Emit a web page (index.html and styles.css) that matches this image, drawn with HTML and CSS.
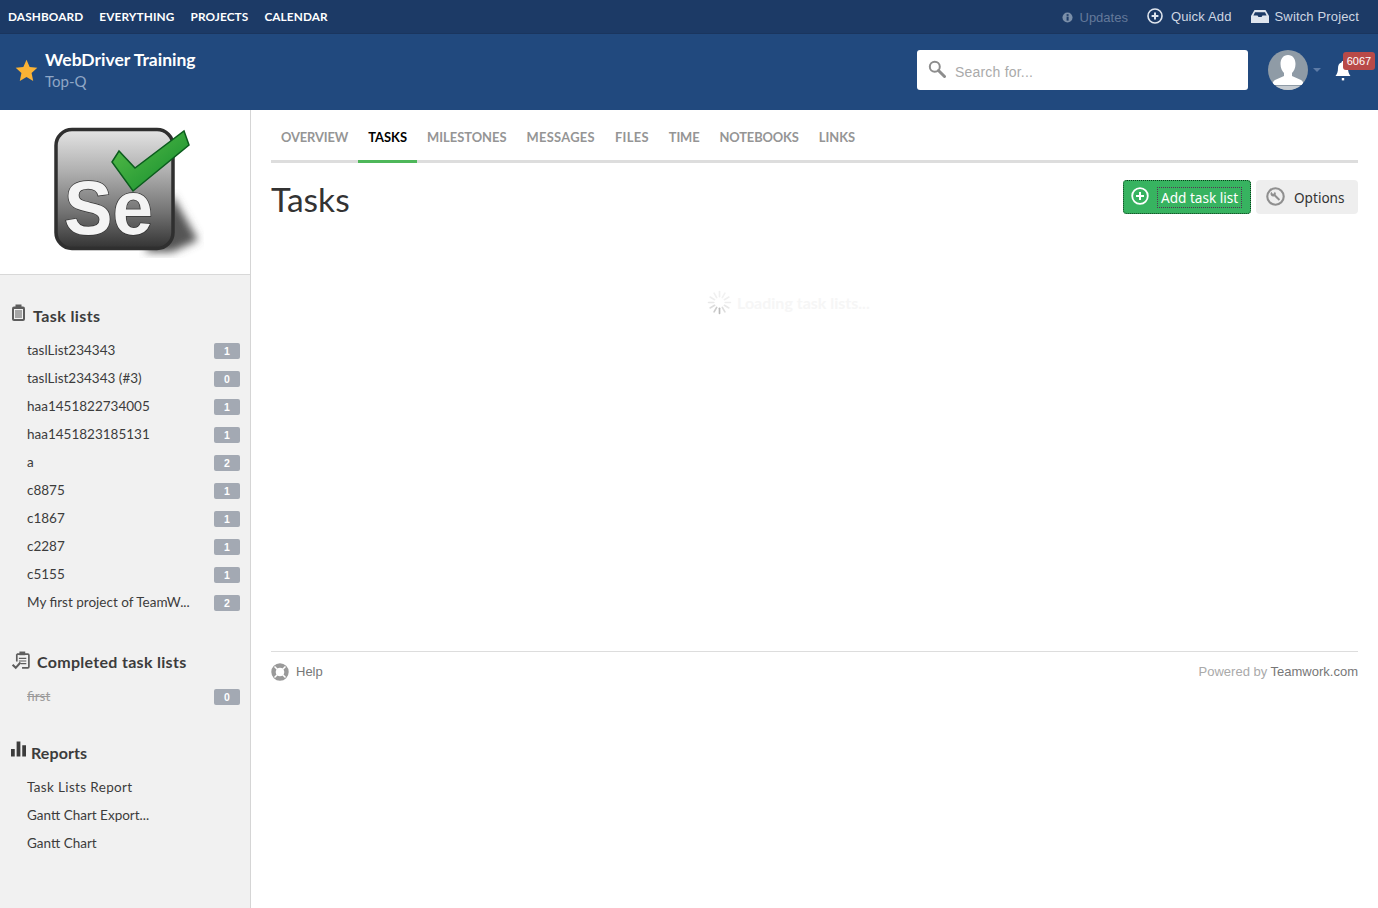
FILE: index.html
```html
<!DOCTYPE html>
<html lang="en">
<head>
<meta charset="utf-8">
<title>Tasks</title>
<link rel="stylesheet" href="styles.css">
</head>
<body>
<header class="topbar">
  <nav class="topnav">
    <a>DASHBOARD</a><a>EVERYTHING</a><a>PROJECTS</a><a>CALENDAR</a>
  </nav>
  <div class="toplinks">
    <span class="toplink dim">
      <svg class="ico-info" viewBox="0 0 12 12"><circle cx="6" cy="6" r="5.5" fill="#7b8fa9"/><rect x="5" y="5" width="2.2" height="4.4" fill="#1c3a66"/><rect x="5" y="2.4" width="2.2" height="1.8" fill="#1c3a66"/></svg>
      Updates
    </span>
    <span class="toplink">
      <svg class="ico-plus" viewBox="0 0 16 16"><circle cx="8" cy="8" r="7" fill="none" stroke="#dfe5ee" stroke-width="1.6"/><path d="M8 4.6v6.8M4.6 8h6.8" stroke="#dfe5ee" stroke-width="2"/></svg>
      Quick Add
    </span>
    <span class="toplink">
      <svg class="ico-box" viewBox="0 0 18 13"><path d="M3.5 0h11L18 6v7H0V6z" fill="#dfe5ee"/><path d="M4 2.2h10l1.6 3.2H11.5L10.5 7h-3L6.5 5.4H2.4z" fill="#1c3a66"/></svg>
      Switch Project
    </span>
  </div>
</header>
<section class="projectbar">
  <div class="project">
    <svg class="star" viewBox="0 0 24 24"><path d="M12 .8l3.3 7.6 8 .8-6 5.5 1.7 8.2L12 18.700 5 22.900l1.700-8.200-6-5.500 8-.8z" fill="#fbb335"/></svg>
    <div>
      <div class="project-name">WebDriver Training</div>
      <div class="project-company">Top-Q</div>
    </div>
  </div>
  <div class="search">
    <svg class="ico-search" viewBox="0 0 18 18"><circle cx="6.800" cy="6.800" r="5" fill="none" stroke="#8d8d8d" stroke-width="2"/><path d="M10.500 10.500l6 6" stroke="#8d8d8d" stroke-width="3" stroke-linecap="round"/></svg>
    <span class="search-hint">Search for...</span>
  </div>
  <div class="avatar-wrap">
    <svg class="avatar" viewBox="0 0 40 40"><defs><clipPath id="avc"><circle cx="20" cy="20" r="20"/></clipPath></defs><g clip-path="url(#avc)"><rect width="40" height="40" fill="#8f9ba6"/><path d="M20 5c5 0 7.500 4 7.500 9 0 4-1.500 7-3.500 9v3l9 4c2 1 2.500 3 2.500 5H4.500c0-2 .5-4 2.500-5l9-4v-3c-2-2-3.500-5-3.500-9 0-5 2.500-9 7.500-9z" fill="#fff"/><rect y="36" width="40" height="4" fill="#c5cbd1"/></g></svg>
    <span class="caret"></span>
  </div>
  <div class="bell-wrap">
    <svg class="bell" viewBox="0 0 16 22"><path d="M8 1c1 0 1.500.6 1.500 1.500C12 3.300 13 5.500 13 8c0 4 1 6 2.500 8H.5C2 14 3 12 3 8c0-2.500 1-4.700 3.500-5.500C6.500 1.600 7 1 8 1z" fill="#fff"/><rect x="6.800" y="18" width="2.400" height="2.400" fill="#fff"/></svg>
    <span class="bell-count">6067</span>
  </div>
</section>
<div class="layout">
  <aside class="sidebar">
    <div class="logo">
      <svg class="logo-svg" viewBox="0 0 155 135">
        <defs>
          <linearGradient id="tile" x1="0" y1="0" x2="0" y2="1"><stop offset="0" stop-color="#e4e4e4"/><stop offset=".35" stop-color="#b0b0b0"/><stop offset=".7" stop-color="#727272"/><stop offset="1" stop-color="#333"/></linearGradient>
          <linearGradient id="check" x1="0" y1="0" x2="1" y2="1"><stop offset="0" stop-color="#5cc04a"/><stop offset="1" stop-color="#0f8a2c"/></linearGradient>
          <filter id="blur"><feGaussianBlur stdDeviation="4"/></filter>
        </defs>
        <path d="M122 70l26 45-26 12H95z" fill="#555" filter="url(#blur)"/>
        <rect x="6" y="4.500" width="117" height="119" rx="16" fill="url(#tile)" stroke="#2f2f2f" stroke-width="3.500"/>
        <text class="logo-text" x="14" y="109" textLength="89" lengthAdjust="spacingAndGlyphs">Se</text>
        <path d="M62 37l7-11 16 17 49-37 5 14-56 46z" fill="url(#check)" stroke="#0b5c1d" stroke-width="1.500"/>
      </svg>
    </div>
    <div class="side-section first">
      <h3 class="side-head wide">
        <svg class="ico-clip" viewBox="0 0 15 18"><rect x="1" y="2.500" width="13" height="14.500" rx="2" fill="#5d5d5d"/><rect x="3" y="5" width="9" height="10" fill="#f1f1f1"/><rect x="4.500" y=".5" width="6" height="3.500" fill="#5d5d5d"/><path d="M4 7h7M4 9h7M4 11h7M4 13h7" stroke="#5d5d5d"/></svg>
        Task lists
      </h3>
      <ul class="side-list">
        <li><a>taslList234343</a><b>1</b></li>
        <li><a>taslList234343 (#3)</a><b>0</b></li>
        <li><a>haa1451822734005</a><b>1</b></li>
        <li><a>haa1451823185131</a><b>1</b></li>
        <li><a>a</a><b>2</b></li>
        <li><a>c8875</a><b>1</b></li>
        <li><a>c1867</a><b>1</b></li>
        <li><a>c2287</a><b>1</b></li>
        <li><a>c5155</a><b>1</b></li>
        <li><a>My first project of TeamW...</a><b>2</b></li>
      </ul>
    </div>
    <div class="side-section second">
      <h3 class="side-head">
        <svg class="ico-done" viewBox="0 0 18 19"><path d="M5 3h10.500a1 1 0 0 1 1 1v11a1 1 0 0 1-1 1H10" fill="none" stroke="#5d5d5d" stroke-width="1.600"/><path d="M5 3v7" stroke="#5d5d5d" stroke-width="1.600"/><rect x="7.500" y=".5" width="5.500" height="3.500" fill="#5d5d5d"/><path d="M7 7h7M7 9.500h7M9 12h5" stroke="#5d5d5d"/><path d="M1 13l3 3 4.500-5" fill="none" stroke="#5d5d5d" stroke-width="2"/></svg>
        Completed task lists
      </h3>
      <ul class="side-list">
        <li><a class="struck">first</a><b>0</b></li>
      </ul>
    </div>
    <div class="side-section third">
      <h3 class="side-head tight">
        <svg class="ico-bars" viewBox="0 0 16 16"><rect y="8" width="4" height="8" fill="#3c3c3c"/><rect x="6" width="4" height="16" fill="#3c3c3c"/><rect x="12" y="4" width="4" height="12" fill="#3c3c3c"/></svg>
        Reports
      </h3>
      <ul class="side-list">
        <li><a class="spaced">Task Lists Report</a></li>
        <li><a>Gantt Chart Export...</a></li>
        <li><a>Gantt Chart</a></li>
      </ul>
    </div>
  </aside>
  <main class="main">
    <nav class="tabs">
      <a class="narrow">OVERVIEW</a><a class="active">TASKS</a><a>MILESTONES</a><a class="loose">MESSAGES</a><a class="loose">FILES</a><a class="narrow">TIME</a><a class="narrow">NOTEBOOKS</a><a>LINKS</a>
    </nav>
    <div class="titlebar">
      <h1>Tasks</h1>
      <div class="actions">
        <button class="btn btn-add" type="button">
          <svg class="ico-add" viewBox="0 0 18 18"><circle cx="9" cy="9" r="7.800" fill="none" stroke="#fff" stroke-width="1.800"/><path d="M9 5v8M5 9h8" stroke="#fff" stroke-width="2"/></svg>
          <span class="btn-label">Add task list</span>
        </button>
        <button class="btn btn-opt" type="button">
          <svg class="ico-opt" viewBox="0 0 18 18"><circle cx="9" cy="9" r="7.800" fill="none" stroke="#8f8f8f" stroke-width="2"/><path d="M5.200 4.600a2.600 2.600 0 0 0-.4 3.400 2.600 2.600 0 0 0 3 .7l4.300 4.300 1.300-1.300-4.300-4.300a2.600 2.600 0 0 0-.8-3l-1 2-1.300-.2z" fill="#8f8f8f"/></svg>
          <span>Options</span>
        </button>
      </div>
    </div>
    <div class="loading">
      <svg class="spinner" viewBox="0 0 24 24"><g stroke-width="1.600" stroke-linecap="round"><path d="M12 1.500v5" stroke="#f0f0f0"/><path d="M17.200 3l-2.500 4.300" stroke="#f2f2f2"/><path d="M21 6.800l-4.300 2.500" stroke="#f0f0f0"/><path d="M22.500 12h-5" stroke="#eee"/><path d="M21 17.200l-4.300-2.500" stroke="#e8e8e8"/><path d="M17.200 21l-2.500-4.300" stroke="#ddd"/><path d="M12 22.500v-5" stroke="#bbb"/><path d="M6.800 21l2.500-4.300" stroke="#ccc"/><path d="M3 17.200l4.300-2.500" stroke="#ddd"/><path d="M1.500 12h5" stroke="#e8e8e8"/><path d="M3 6.800l4.300 2.500" stroke="#eee"/><path d="M6.800 3l2.500 4.300" stroke="#f0f0f0"/></g></svg>
      <span>Loading task lists...</span>
    </div>
    <footer class="footer">
      <span class="help">
        <svg class="ico-help" viewBox="0 0 18 18"><circle cx="9" cy="9" r="6.500" fill="none" stroke="#9a9a9a" stroke-width="4.400"/><path d="M3.500 3.500l3 3M14.500 3.500l-3 3M3.500 14.500l3-3M14.500 14.500l-3-3" stroke="#fff" stroke-width="1.500"/></svg>
        Help
      </span>
      <span class="powered">Powered by <em>Teamwork.com</em></span>
    </footer>
  </main>
</div>
</body>
</html>
```
FILE: styles.css
```css
* { box-sizing: border-box; }
html, body { margin: 0; height: 100%; }
body { font-family: Lato, "Liberation Sans", sans-serif; background: #fff; color: #333; overflow: hidden; }
h1, h3, ul { margin: 0; padding: 0; }
ul { list-style: none; }

.topbar { height: 34px; background: #1c3a66; border-bottom: 1px solid #1a355e; display: flex; justify-content: space-between; align-items: center; padding: 0 19px 0 8px; }
.topnav { display: flex; gap: 16px; }
.topnav a { color: #fff; font-size: 11.800px; font-weight: 700; letter-spacing: .12px; }
.toplinks { display: flex; gap: 19px; align-items: center; }
.toplink { display: flex; align-items: center; gap: 7px; color: #ced6e2; font: 13px "Liberation Sans", sans-serif; letter-spacing: .15px; margin-bottom: 1px; }
.toplink.dim { color: #64799a; margin-top: 2px; margin-bottom: 0; letter-spacing: 0; }
.ico-info { width: 11px; height: 11px; }
.ico-plus { width: 16px; height: 16px; margin-right: 1px; }
.ico-box { width: 18px; height: 13px; margin-right: -1px; }

.projectbar { height: 76px; background: #21497e; display: flex; align-items: center; padding: 0 3px 4px 15px; }
.project { display: flex; align-items: center; gap: 7px; flex: 1; }
.star { width: 23px; height: 23px; }
.project-name { color: #fff; font-size: 17.500px; font-weight: 700; line-height: 22px; }
.project-company { color: #8fa6c5; font-size: 15px; line-height: 21px; }
.search { width: 331px; height: 40px; background: #fff; border-radius: 3px; display: flex; align-items: center; gap: 9px; padding-left: 11px; color: #aaa; font: 14px "Liberation Sans", sans-serif; letter-spacing: .2px; }
.search-hint { margin-top: 3px; }
.ico-search { width: 18px; height: 18px; margin-top: -3px; }
.avatar-wrap { display: flex; align-items: center; margin-left: 20px; }
.avatar { width: 40px; height: 40px; }
.caret { width: 0; height: 0; border: 4px solid transparent; border-top: 4px solid #5d7ba6; border-bottom: 0; margin-left: 5px; }
.bell-wrap { position: relative; width: 44px; height: 40px; margin-left: 10px; }
.bell { position: absolute; left: 4px; top: 10px; width: 16px; height: 22px; }
.bell-count { position: absolute; left: 12px; top: 2px; width: 32px; height: 18px; background: #b94a48; border-radius: 3px; color: #fff; font: 11px/18px "Liberation Sans", sans-serif; text-align: center; }

.layout { display: flex; height: 798px; }
.sidebar { width: 251px; flex: none; background: #f1f1f1; border-right: 1px solid #d5d5d5; }
.logo { height: 165px; background: #fff; border-bottom: 1px solid #d8d8d8; padding: 15px 0 0 50px; }
.logo-svg { display: block; width: 155px; height: 135px; }
.logo-text { font: 700 76px "Liberation Sans", sans-serif; fill: #f4f4f4; stroke: #333; stroke-width: 1.500px; paint-order: stroke; }
.side-section { padding: 0 10px 0 11px; }
.side-section.first { padding-top: 28px; }
.side-section.second { padding-top: 33px; }
.side-section.third { padding-top: 30px; }
.side-head { display: flex; align-items: center; gap: 6px; height: 24px; color: #3c3c3c; font-size: 16px; font-weight: 700; letter-spacing: .3px; }
.side-head.wide { gap: 7px; letter-spacing: .4px; }
.side-head.tight { gap: 5px; letter-spacing: .1px; }
.ico-clip { width: 15px; height: 18px; margin-top: -4px; }
.ico-done { width: 20px; height: 20px; margin-top: -1px; }
.ico-bars { width: 15px; height: 16px; margin-top: -6px; }
.side-list { padding-top: 9px; }
.side-list li { height: 28px; display: flex; align-items: center; justify-content: space-between; padding: 0 0 1px 16px; font-size: 13.500px; color: #3c3c3c; }
.side-list a.struck { color: #9a9a9a; text-decoration: line-through; }
.side-list a.spaced { letter-spacing: .35px; }
.side-list b { width: 26px; height: 16px; margin-top: 3px; background: #a3a9b3; border-radius: 2px; color: #fff; font: 700 10.500px/16px "Liberation Sans", sans-serif; text-align: center; }

.main { flex: 1; padding: 0 20px; display: flex; flex-direction: column; }
.tabs { height: 53px; border-bottom: 3px solid #ddd; display: flex; }
.tabs a { height: 53px; line-height: 55px; padding: 0 10px; color: #959595; font-size: 12.900px; font-weight: 700; white-space: nowrap; border-bottom: 3px solid transparent; }
.tabs a.narrow { letter-spacing: -.12px; }
.tabs a.loose { letter-spacing: .3px; }
.tabs a.active { color: #000; border-bottom-color: #4eb75a; }
.titlebar { display: flex; justify-content: space-between; align-items: flex-start; padding-top: 17px; height: 86px; }
h1 { font-size: 33.500px; font-weight: 400; line-height: 40px; color: #333; margin-top: -1px; }
.actions { display: flex; gap: 5px; }
.btn { height: 34px; border: 0; border-radius: 4px; display: flex; align-items: center; font: 13.600px "Noto Sans", sans-serif; padding: 0; }
.btn-add { width: 128px; background: #37b360; color: #fff; outline: 1px dotted #0c3a1c; outline-offset: -1px; gap: 9px; padding-left: 8px; }
.btn-label { outline: 1px dotted #553355; padding: 0 3px; line-height: 19px; }
.btn-opt { width: 102px; background: #eee; color: #333; gap: 9px; padding-left: 10px; }
.ico-add { width: 18px; height: 18px; margin-top: -2px; }
.ico-opt { width: 19px; height: 19px; margin-top: -2px; }
.loading { height: 402px; padding: 41px 0 0 436px; display: flex; align-items: flex-start; gap: 5px; color: #f6f6f6; font-size: 16px; font-weight: 700; }
.loading span { line-height: 26px; }
.spinner { width: 25px; height: 25px; }
.footer { border-top: 1px solid #ddd; display: flex; justify-content: space-between; align-items: center; height: 40px; font: 13px "Liberation Sans", sans-serif; color: #8f8f8f; }
.help { display: flex; align-items: center; gap: 7px; color: #777; }
.ico-help { width: 18px; height: 18px; }
.powered { color: #aaa; }
.powered em { font-style: normal; color: #777; }
```
